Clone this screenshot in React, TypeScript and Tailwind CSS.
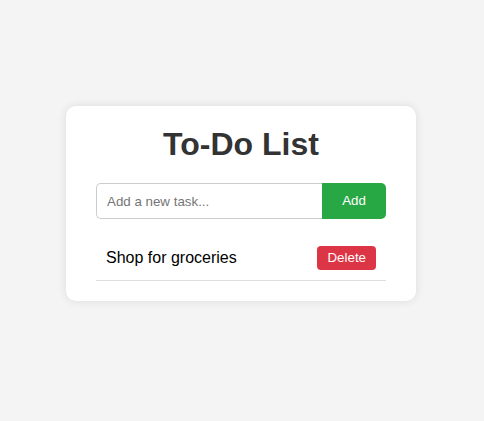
import React, { useState } from 'react';

export default function App() {
  const [tasks, setTasks] = useState<string[]>(['Shop for groceries']);
  const [text, setText] = useState('');

  const addTask = () => {
    if (!text.trim()) return;
    setTasks([...tasks, text.trim()]);
    setText('');
  };

  return (
    <div className="min-h-screen bg-[#f4f4f4] pt-[106px] pr-[2px] font-['Liberation_Sans',Arial,sans-serif]">
      <div className="mx-auto w-[350px] rounded-[10px] bg-white px-[30px] pt-5 pb-5 shadow-[0_0_10px_rgba(0,0,0,0.1)]">
        <h1 className="text-center text-[32px] font-bold leading-[37px] text-[#333]">To-Do List</h1>
        <div className="mt-5 flex">
          <input
            value={text}
            onChange={(e) => setText(e.target.value)}
            placeholder="Add a new task..."
            className="h-9 flex-1 rounded-l-[5px] border border-r-0 border-[#ccc] px-[10px] text-[13.33px] text-black outline-none placeholder:text-[#757575]"
          />
          <button onClick={addTask} className="h-9 w-16 rounded-r-[5px] bg-[#28a745] text-[13.33px] text-white">
            Add
          </button>
        </div>
        <ul className="mt-[17px]">
          {tasks.map((t, i) => (
            <li key={i} className="flex items-center justify-between border-b border-[#ddd] p-[10px]">
              <span className="text-base text-black">{t}</span>
              <button
                onClick={() => setTasks(tasks.filter((_, j) => j !== i))}
                className="h-6 rounded-[4px] bg-[#dc3545] px-[10px] text-[13.33px] text-white"
              >
                Delete
              </button>
            </li>
          ))}
        </ul>
      </div>
    </div>
  );
}
